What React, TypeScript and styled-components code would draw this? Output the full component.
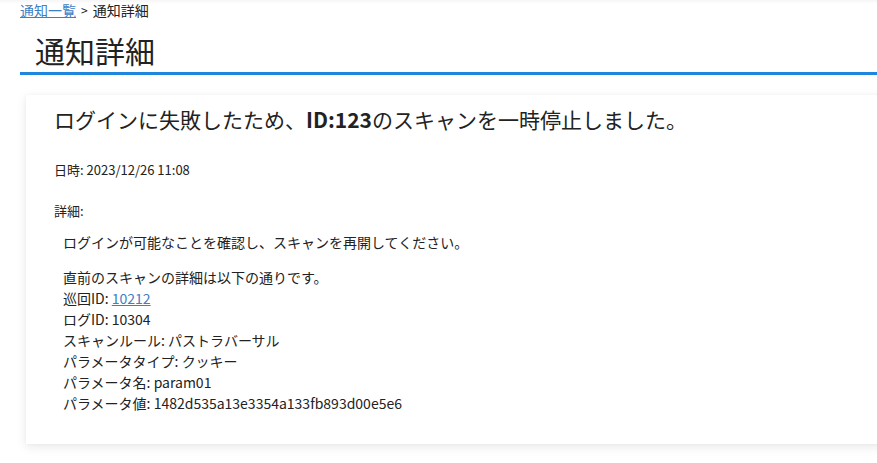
import React from "react";
import styled, { createGlobalStyle } from "styled-components";

const GlobalStyle = createGlobalStyle`
  html, body {
    margin: 0;
    padding: 0;
    background: #ffffff;
    overflow: hidden;
  }
  body {
    font-family: "Noto Sans CJK JP", "Noto Sans", sans-serif;
    color: #222222;
  }
`;

const Page = styled.div`
  position: relative;
  padding: 0 0 0 20px;
  min-height: 463px;
  box-sizing: border-box;
  box-shadow: inset 0 5px 4px -4px rgba(0, 0, 0, 0.06);
`;

const Breadcrumb = styled.nav`
  font-size: 14px;
  line-height: 20px;
  height: 20px;
  display: flex;
  align-items: center;
  gap: 3px;
  color: #222;
`;

const CrumbLink = styled.a`
  color: #3d80c4;
  text-decoration: underline;
  cursor: pointer;
`;

const Separator = styled.span`
  font-size: 12px;
  padding: 0 2px;
`;

const PageTitle = styled.h1`
  margin: 9px 0 0 0;
  padding: 0 0 0 15px;
  font-size: 30px;
  font-weight: 400;
  line-height: 43px;
  border-bottom: 3px solid #1e86dc;
`;

const Card = styled.section`
  margin: 20px -40px 0 6px;
  padding: 9px 28px 30px 28px;
  background: #fff;
  box-shadow: 0 3px 10px rgba(0, 0, 0, 0.09), 0 0 3px rgba(0, 0, 0, 0.04);
`;

const CardTitle = styled.h2`
  margin: 0;
  font-size: 21px;
  font-weight: 400;
  line-height: 30px;
  white-space: nowrap;

  strong {
    font-weight: 700;
  }
`;

const MetaRow = styled.div<{ $gap: number }>`
  margin-top: ${(p) => p.$gap}px;
  font-size: 13px;
  line-height: 20px;
`;

const DetailBody = styled.div`
  margin-top: 11px;
  padding-left: 9px;
  font-size: 14px;
  line-height: 21px;
`;

const Paragraph = styled.p`
  margin: 0 0 14px 0;
  &:last-child {
    margin-bottom: 0;
  }
`;

const InlineLink = styled.a`
  color: #3d80c4;
  text-decoration: underline;
  cursor: pointer;
`;

const details: [string, React.ReactNode][] = [
  ["巡回ID", <InlineLink key="l">10212</InlineLink>],
  ["ログID", "10304"],
  ["スキャンルール", "パストラバーサル"],
  ["パラメータタイプ", "クッキー"],
  ["パラメータ名", "param01"],
  ["パラメータ値", "1482d535a13e3354a133fb893d00e5e6"],
];

export default function App() {
  return (
    <>
      <GlobalStyle />
      <Page>
        <Breadcrumb>
          <CrumbLink>通知一覧</CrumbLink>
          <Separator>&gt;</Separator>
          <span>通知詳細</span>
        </Breadcrumb>
        <PageTitle>通知詳細</PageTitle>
        <Card>
          <CardTitle>
            ログインに失敗したため、<strong>ID:123</strong>のスキャンを一時停止しました。
          </CardTitle>
          <MetaRow $gap={26}>日時: 2023/12/26 11:08</MetaRow>
          <MetaRow $gap={21}>詳細:</MetaRow>
          <DetailBody>
            <Paragraph>ログインが可能なことを確認し、スキャンを再開してください。</Paragraph>
            <Paragraph>
              直前のスキャンの詳細は以下の通りです。
              {details.map(([k, v]) => (
                <React.Fragment key={k}>
                  <br />
                  {k}: {v}
                </React.Fragment>
              ))}
            </Paragraph>
          </DetailBody>
        </Card>
      </Page>
    </>
  );
}
